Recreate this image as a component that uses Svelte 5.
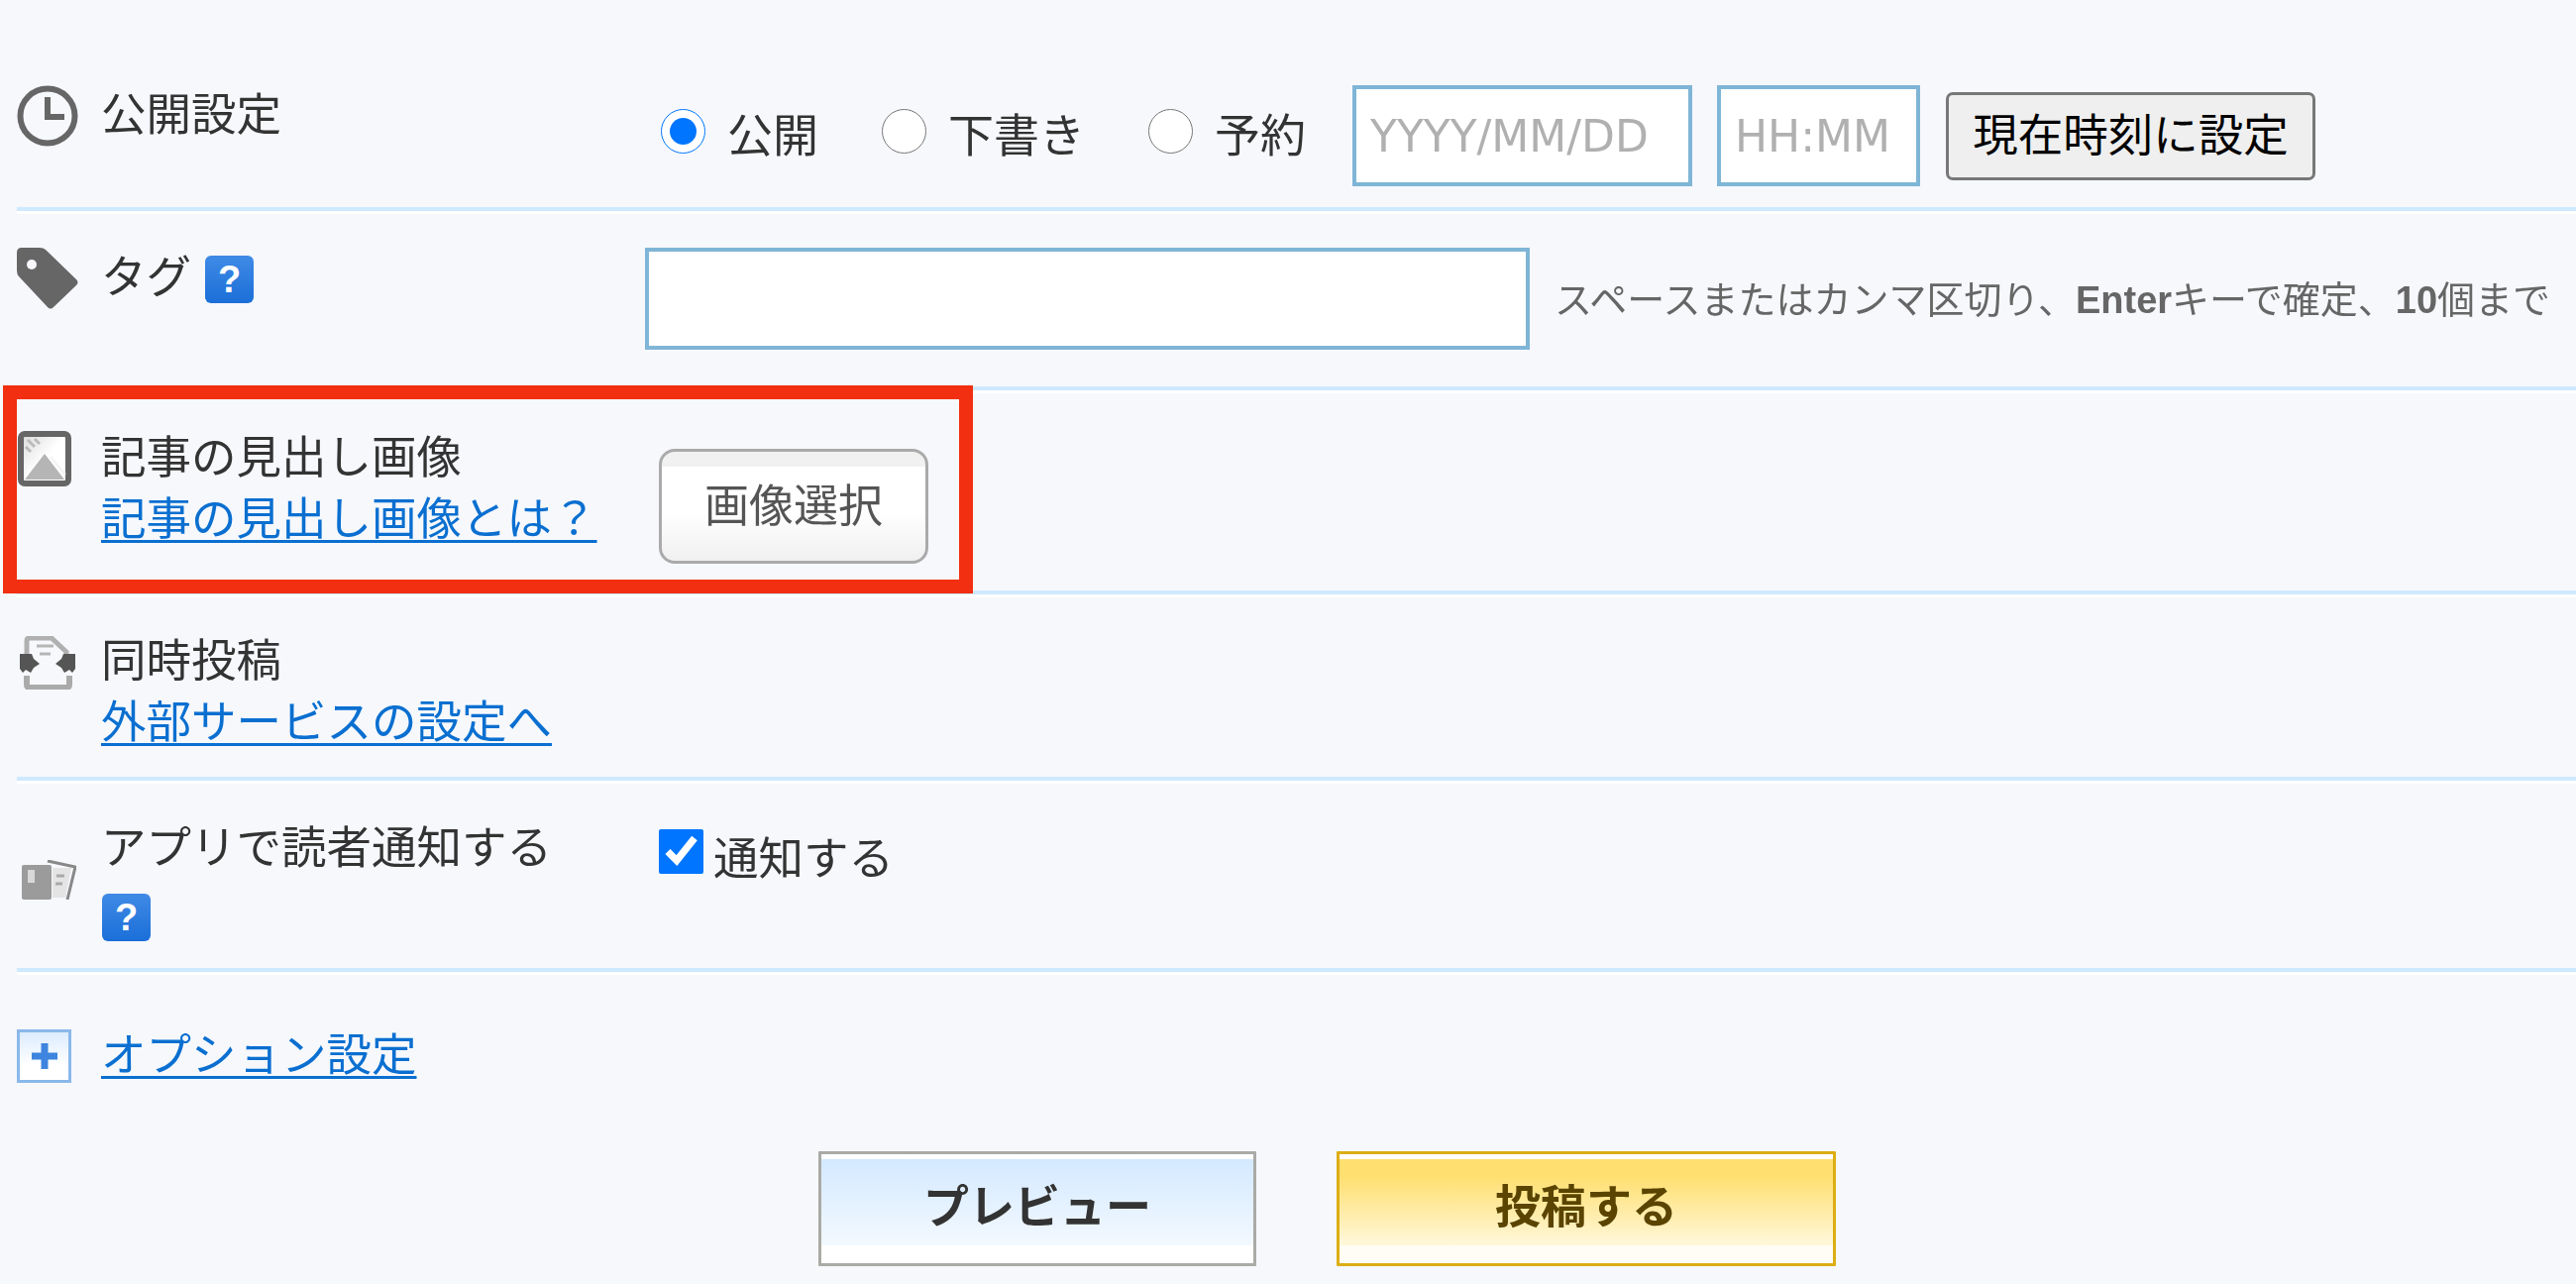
<script lang="ts">
  const visibility = [
    { id: "public", label: "公開", checked: true },
    { id: "draft", label: "下書き", checked: false },
    { id: "reserve", label: "予約", checked: false },
  ];
</script>

{#snippet help()}
  <span class="help">?</span>
{/snippet}

<div class="form">
  <div class="row row-publish">
    <svg class="icon" viewBox="0 0 62 62">
      <circle cx="31" cy="31" r="27.5" fill="none" stroke="#666" stroke-width="6" />
      <path d="M31 12v20h17" fill="none" stroke="#666" stroke-width="6" />
    </svg>
    <div class="label">公開設定</div>
    <div class="controls publish">
      {#each visibility as v}
        <label class="radio">
          <input type="radio" name="visibility" value={v.id} checked={v.checked} />
          <span>{v.label}</span>
        </label>
      {/each}
      <input class="text date" type="text" placeholder="YYYY/MM/DD" />
      <input class="text time" type="text" placeholder="HH:MM" />
      <button class="now">現在時刻に設定</button>
    </div>
  </div>

  <div class="row row-tag">
    <svg class="icon" viewBox="0 0 62 62">
      <path
        d="M5 0h18q4 0 6 2l31 30q3 3 0 6L37 60q-3 3-6 0L2 29q-2-2-2-6V5q0-5 5-5z"
        fill="#666"
      />
      <circle cx="15" cy="17" r="5" fill="#f6f8fc" />
    </svg>
    <div class="label">タグ{@render help()}</div>
    <div class="controls tag">
      <input class="text tag-input" type="text" />
      <span class="hint">スペースまたはカンマ区切り、<b>Enter</b>キーで確定、<b>10</b>個まで</span>
    </div>
  </div>

  <div class="row row-image">
    <svg class="icon small" viewBox="0 0 54 56">
      <defs>
        <linearGradient id="sky" x1="0" y1="0" x2="1" y2="1">
          <stop offset="0" stop-color="#d8d8d8" />
          <stop offset="0.5" stop-color="#fff" />
        </linearGradient>
      </defs>
      <rect x="3" y="3" width="48" height="50" rx="4" fill="url(#sky)" stroke="#666" stroke-width="6" />
      <path d="M7 49 27 23l20 26z" fill="#b5b5b5" />
      <path d="M33 26l15 18" stroke="#f4f4f4" stroke-width="2" />
      <path d="M10 9l7 7M8 16l5 5M17 8l5 5" stroke="#bbb" stroke-width="3" />
    </svg>
    <div class="label">
      <div>記事の見出し画像</div>
      <a href="#help">記事の見出し画像とは？</a>
    </div>
    <div class="controls">
      <button class="select">画像選択</button>
    </div>
    <div class="highlight"></div>
  </div>

  <div class="row row-share">
    <svg class="icon share" viewBox="0 0 56 54">
      <path d="M7 18V5q0-3 3-3h22l15 14v2" fill="none" stroke="#b0b0b0" stroke-width="5" />
      <path d="M7 40v9q0 3 3 3h37q3 0 3-3v-9" fill="none" stroke="#aaa" stroke-width="6" />
      <path d="M17 10h17M20 18h11" stroke="#b5b5b5" stroke-width="3" />
      <path d="M0 18h12l2 5 6 5-6 4-3 5-5-3-3 3-3-4z" fill="#555" />
      <path d="M56 18H44l-2 5-6 5 6 4 3 5 5-3 3 3 3-4z" fill="#555" />
    </svg>
    <div class="label">
      <div>同時投稿</div>
      <a href="#services">外部サービスの設定へ</a>
    </div>
  </div>

  <div class="row row-app">
    <svg class="icon app" viewBox="0 0 57 40">
      <rect x="2" y="5" width="30" height="35" rx="2" fill="#9b9b9b" />
      <rect x="8" y="10" width="7" height="13" fill="#d8d8d8" />
      <path d="M33 8h19l-6 30H33z" fill="#e4e4e4" />
      <path d="M28 1l28 6-8 33" fill="none" stroke="#888" stroke-width="3" />
      <path d="M37 16h8M36 24h7" stroke="#aaa" stroke-width="3" />
    </svg>
    <div class="label">
      <div>アプリで読者通知する</div>
      <div class="help-line">{@render help()}</div>
    </div>
    <div class="controls notify">
      <label class="check">
        <input type="checkbox" checked />
        <span>通知する</span>
      </label>
    </div>
  </div>

  <div class="options">
    <span class="plus"></span>
    <a href="#options">オプション設定</a>
  </div>

  <div class="actions">
    <button class="btn preview">プレビュー</button>
    <button class="btn post">投稿する</button>
  </div>
</div>

<style>
  :global(body) {
    background: #f6f8fc;
  }

  .form {
    width: 2600px;
    height: 1296px;
    padding-left: 17px;
    box-sizing: border-box;
    overflow: hidden;
    filter: blur(0.5px);
    font-family: "Noto Sans CJK JP", sans-serif;
    font-size: 45.5px;
    line-height: 62px;
    color: #333;
  }

  .row {
    position: relative;
    display: flex;
    align-items: flex-start;
    box-sizing: border-box;
    border-bottom: 4px solid #cfe9ff;
    box-shadow: 0 3px 0 #fff;
  }

  .row-publish {
    height: 213px;
    padding-top: 83px;
  }

  .row-tag {
    height: 181px;
    padding-top: 34px;
  }

  .row-image {
    height: 206px;
    padding-top: 35px;
  }

  .row-share {
    height: 188px;
    padding-top: 34px;
  }

  .row-app {
    height: 193px;
    padding-top: 35px;
  }

  .icon {
    flex: none;
    width: 62px;
    height: 62px;
    margin-right: 24px;
  }

  .row-publish .icon {
    margin-top: 3px;
  }

  .row-tag .icon {
    margin-top: 3px;
  }

  .icon.small {
    width: 54px;
    height: 56px;
    margin: 6px 31px 0 1px;
  }

  .icon.share {
    width: 56px;
    height: 54px;
    margin: 8px 27px 0 3px;
  }

  .icon.app {
    width: 57px;
    height: 40px;
    margin: 45px 26px 0 3px;
  }

  .label {
    flex: none;
    width: 549px;
    margin: -2px 0 0 -1px;
  }

  a {
    color: #0a6fd0;
    text-decoration-thickness: 3px;
    text-underline-offset: 5px;
  }

  .help {
    position: relative;
    top: -7px;
    display: inline-block;
    width: 49px;
    height: 48px;
    margin-left: 14px;
    border-radius: 6px;
    background: linear-gradient(#3f8ae6, #1b6fd8);
    color: #fff;
    font-family: "Liberation Sans", sans-serif;
    font-size: 38px;
    font-weight: 700;
    line-height: 48px;
    text-align: center;
    vertical-align: -6px;
  }

  .help-line {
    margin-top: 6px;
    padding-left: 1px;
  }

  .help-line .help {
    margin-left: 0;
  }

  .controls {
    display: flex;
    align-items: center;
  }

  .publish {
    margin-top: 3px;
    height: 102px;
    margin-left: 16px;
  }

  .radio {
    display: flex;
    align-items: center;
    gap: 22px;
    margin-right: 64px;
    font-size: 46px;
  }

  .radio:nth-child(3) {
    margin-right: 47px;
  }

  .radio input,
  .check input {
    width: 45px;
    height: 45px;
    margin: 0 0 10px;
  }

  .radio span {
    position: relative;
    top: -4px;
  }

  .text {
    box-sizing: border-box;
    height: 102px;
    border: 4px solid #7fb5d6;
    border-radius: 0;
    background: #fff;
    outline: none;
    font-family: "DejaVu Sans", sans-serif;
    font-size: 44px;
    padding: 0 14px;
  }

  .text::placeholder {
    color: #b0b0b0;
  }

  .date {
    width: 343px;
    margin-right: 25px;
  }

  .time {
    width: 205px;
    margin-right: 26px;
  }

  .now {
    box-sizing: border-box;
    width: 373px;
    height: 89px;
    padding: 0 0 6px;
    border: 3px solid #777;
    border-radius: 7px;
    background: #efefef;
    color: #000;
    font: inherit;
    line-height: 1;
  }

  .tag {
    margin-top: 3px;
  }

  .tag-input {
    width: 893px;
    height: 103px;
    margin-right: 25px;
  }

  .hint {
    color: #666;
    font-size: 38px;
    line-height: 50px;
  }

  .hint b {
    font-family: "Liberation Sans", sans-serif;
    font-size: 38px;
    font-weight: 700;
  }

  .select {
    box-sizing: border-box;
    width: 272px;
    height: 116px;
    margin: 24px 0 0 14px;
    padding: 0 0 8px;
    border: 3px solid #aaa;
    border-radius: 16px;
    background: linear-gradient(#f1f1f1 0 14%, #fff 14% 55%, #f0f0f0);
    color: #555;
    font: inherit;
    font-size: 45px;
    line-height: 1;
  }

  .highlight {
    position: absolute;
    left: -14px;
    top: -5px;
    width: 979px;
    height: 210px;
    box-sizing: border-box;
    border: 14px solid #f22f10;
  }

  .notify {
    margin: 10px 0 0 14px;
  }

  .check {
    display: flex;
    align-items: center;
    gap: 10px;
  }

  .check span {
    position: relative;
    top: -1px;
  }

  .options {
    display: flex;
    align-items: flex-start;
    padding-top: 49px;
    height: 181px;
    box-sizing: border-box;
  }

  .plus {
    position: relative;
    flex: none;
    box-sizing: border-box;
    width: 55px;
    height: 54px;
    margin: 9px 30px 0 0;
    border: 3px solid #8ab8ea;
    background: linear-gradient(#dcecff, #fff 70%);
  }

  .plus::before,
  .plus::after {
    content: "";
    position: absolute;
    left: 50%;
    top: 50%;
    background: #3d85de;
    transform: translate(-50%, -50%);
  }

  .plus::before {
    width: 26px;
    height: 7px;
  }

  .plus::after {
    width: 7px;
    height: 26px;
  }

  .actions {
    display: flex;
    gap: 81px;
    padding-left: 809px;
  }

  .btn {
    box-sizing: border-box;
    height: 116px;
    padding: 0 0 12px;
    border-width: 3px;
    border-style: solid;
    border-radius: 1px;
    font: inherit;
    font-size: 46px;
    font-weight: 700;
    line-height: 1;
  }

  .preview {
    width: 442px;
    border-color: #aaaaa6;
    color: #333;
    background: linear-gradient(#fff 0 5px, #d4e9ff 5px, #f3f9ff 84%, #fff 84%);
  }

  .post {
    width: 504px;
    border-color: #dcae14;
    color: #5a4400;
    background: linear-gradient(#fff 0 5px, #ffdf70 5px 20%, #fff8dc 84%, #fffdf5 84%);
  }
</style>
